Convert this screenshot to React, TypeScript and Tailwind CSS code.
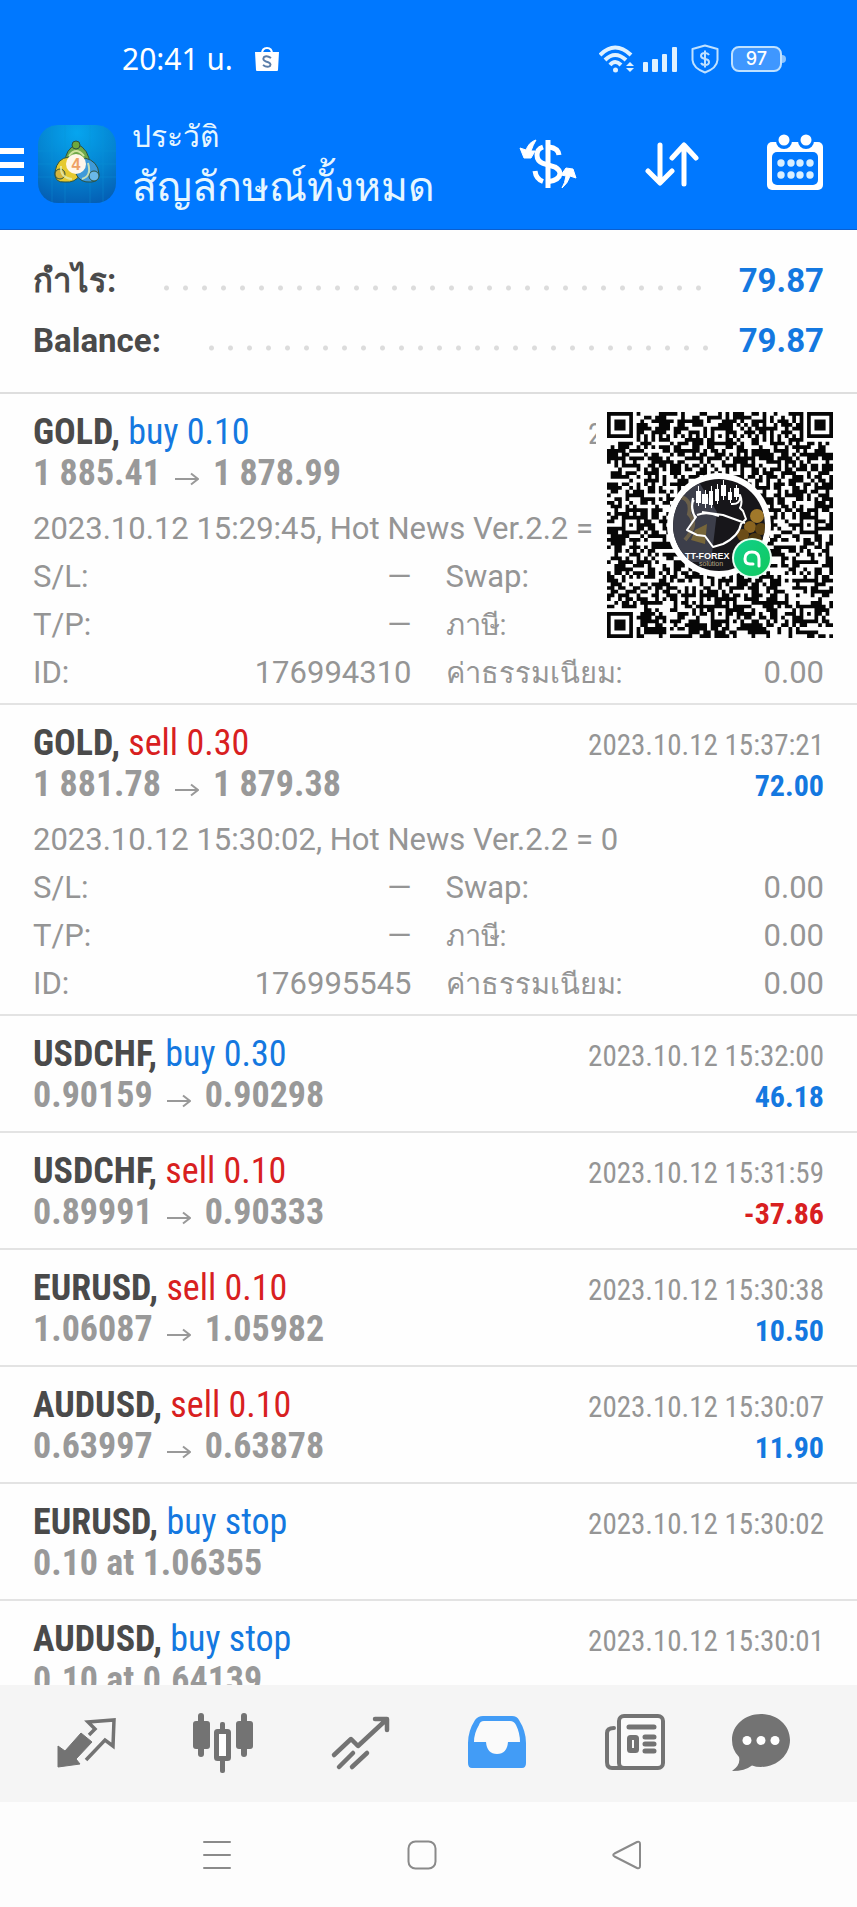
import React from "react";

type Tone = "buy" | "sell";

interface Details {
  comment: string;
  id: string;
}

interface Deal {
  symbol: string;
  action: string;
  tone: Tone;
  price: string;
  target?: string;
  time: string;
  profit?: string;
  loss?: boolean;
  details?: Details;
  code?: boolean;
}

const deals: Deal[] = [
  {
    symbol: "GOLD",
    action: "buy 0.10",
    tone: "buy",
    price: "1 885.41",
    target: "1 878.99",
    time: "2023.10.12 15:37:21",
    details: { comment: "2023.10.12 15:29:45, Hot News Ver.2.2 = 0", id: "176994310" },
    code: true,
  },
  {
    symbol: "GOLD",
    action: "sell 0.30",
    tone: "sell",
    price: "1 881.78",
    target: "1 879.38",
    time: "2023.10.12 15:37:21",
    profit: "72.00",
    details: { comment: "2023.10.12 15:30:02, Hot News Ver.2.2 = 0", id: "176995545" },
  },
  { symbol: "USDCHF", action: "buy 0.30", tone: "buy", price: "0.90159", target: "0.90298", time: "2023.10.12 15:32:00", profit: "46.18" },
  { symbol: "USDCHF", action: "sell 0.10", tone: "sell", price: "0.89991", target: "0.90333", time: "2023.10.12 15:31:59", profit: "-37.86", loss: true },
  { symbol: "EURUSD", action: "sell 0.10", tone: "sell", price: "1.06087", target: "1.05982", time: "2023.10.12 15:30:38", profit: "10.50" },
  { symbol: "AUDUSD", action: "sell 0.10", tone: "sell", price: "0.63997", target: "0.63878", time: "2023.10.12 15:30:07", profit: "11.90" },
  { symbol: "EURUSD", action: "buy stop", tone: "buy", price: "0.10 at 1.06355", time: "2023.10.12 15:30:02" },
  { symbol: "AUDUSD", action: "buy stop", tone: "buy", price: "0.10 at 0.64139", time: "2023.10.12 15:30:01" },
];

const QR_SIZE = 61;

/* Builds one path holding every dark module of the code. */
function buildQrPath(): string {
  const n = QR_SIZE;
  const grid: boolean[][] = Array.from({ length: n }, () => Array<boolean>(n).fill(false));
  let seed = 90217;
  const next = () => {
    seed = (seed * 1103515245 + 12345) % 2147483648;
    return seed / 2147483648;
  };
  for (let y = 0; y < n; y++) for (let x = 0; x < n; x++) grid[y][x] = next() < 0.54;
  for (let i = 8; i < n - 8; i++) {
    grid[6][i] = i % 2 === 0;
    grid[i][6] = i % 2 === 0;
  }
  const rings = (cx: number, cy: number, dark: number[], reach: number) => {
    for (let dy = -reach; dy <= reach; dy++)
      for (let dx = -reach; dx <= reach; dx++) {
        const x = cx + dx;
        const y = cy + dy;
        if (x >= 0 && y >= 0 && x < n && y < n) grid[y][x] = dark.includes(Math.max(Math.abs(dx), Math.abs(dy)));
      }
  };
  for (const [x, y] of [[30, 6], [6, 30], [54, 30], [30, 54], [54, 54]]) rings(x, y, [0, 2], 2);
  for (const [x, y] of [[3, 3], [57, 3], [3, 57]]) rings(x, y, [0, 1, 3], 4);
  let d = "";
  for (let y = 0; y < n; y++)
    for (let x = 0; x < n; x++)
      if (grid[y][x]) {
        let w = 1;
        while (x + w < n && grid[y][x + w]) w++;
        d += `M${x} ${y}h${w}v1h${-w}z`;
        x += w;
      }
  return d;
}

const qrPath = buildQrPath();

function QrCode() {
  return (
    <svg viewBox="0 0 226 226" className="block h-[226px] w-[226px]" role="img" aria-label="QR">
      <defs>
        <clipPath id="badge">
          <circle cx="112" cy="113" r="46" />
        </clipPath>
        <linearGradient id="green" x1="0" y1="0" x2="1" y2="1">
          <stop offset="0" stopColor="#0fd08c" />
          <stop offset="1" stopColor="#12c95c" />
        </linearGradient>
      </defs>
      <g transform="scale(3.705)">
        <path d={qrPath} fill="#060606" />
      </g>
      <circle cx="112" cy="113" r="52" fill="#fff" />
      <g clipPath="url(#badge)">
        <rect x="60" y="60" width="104" height="104" fill="#17161a" />
        <path d="M64 80L92 70L110 100L104 150L64 150Z" fill="#3c3e4a" />
        <path d="M66 84Q86 84 82 102Q92 112 78 128" fill="none" stroke="#6b604a" strokeWidth="4" />
        <path d="M88 118L100 112L98 132L84 128Z" fill="#77663a" />
        <circle cx="150" cy="104" r="7" fill="#a0782a" />
        <circle cx="143" cy="115" r="6" fill="#8a6420" />
        <circle cx="154" cy="117" r="6" fill="#5f4412" />
        <circle cx="136" cy="123" r="6" fill="#6b4c18" />
        <circle cx="148" cy="128" r="7" fill="#4d380f" />
      </g>
      <g fill="#fff">
        <path d="M89 79h5v12h-5zM95 82h6v10h-6zM102 79h4v14h-4zM108 77h4v12h-4zM114 73h5v11h-5zM121 80h4v8h-4zM127 76h5v9h-5z" />
        <path d="M91 74h1v20h-1zM98 78h1v18h-1zM104 74h1v22h-1zM110 72h1v20h-1zM116 68h1v20h-1zM123 76h1v15h-1zM129 73h1v15h-1z" />
      </g>
      <path
        d="M86 86Q83 100 89 105L80 118L90 123L98 124L106 135L116 132Q132 124 134 112L139 107L136 99L133 96Q136 90 133 83Q134 93 124 92M95 100L116 103L138 111M90 103Q100 99 112 104M88 106Q83 92 87 88"
        fill="none"
        stroke="#fff"
        strokeWidth="2"
        strokeLinejoin="round"
      />
      <text x="78" y="147" fontSize="9" fontWeight="700" fill="#fff" fontFamily="Liberation Sans, sans-serif">TT-FOREX</text>
      <text x="92" y="154" fontSize="7" fill="#b8a888" fontFamily="Liberation Sans, sans-serif">solution</text>
      <circle cx="145" cy="146" r="20" fill="#e9fff3" />
      <circle cx="145" cy="146" r="18" fill="url(#green)" />
      <path d="M146 152H143Q138 152 138 147Q138 140 145 140Q152 140 152 147V154" fill="none" stroke="#fff" strokeWidth="3" strokeLinecap="round" />
    </svg>
  );
}

function StatusBar() {
  return (
    <div className="flex h-[117px] items-center justify-between pl-[122px] pr-[71px] text-white">
      <div className="flex items-center gap-[22px]">
        <span className="font-['Noto_Sans','Noto_Sans_Thai',sans-serif] text-[30px] leading-10">20:41 น.</span>
        <svg viewBox="0 0 24 26" className="h-[26px] w-6" aria-hidden="true">
          <path d="M7 8Q7 2 12 2Q17 2 17 8" fill="none" stroke="#fff" strokeWidth="2" />
          <path d="M0 6H24L23 24Q23 25 22 25H2Q1 25 1 24Z" fill="#fff" />
          <path d="M16 12Q12 9 9 11Q7 14 11 15.500Q17 17 15 20Q12 22 8 19" fill="none" stroke="#5a7da8" strokeWidth="2" />
        </svg>
      </div>
      <div className="flex items-center">
        <svg viewBox="0 0 36 28" className="h-7 w-9" aria-hidden="true" fill="none" stroke="#dff1ff">
          <path d="M1 10Q16 -5 32 10" strokeWidth="4" />
          <path d="M6 15Q16 5 27 15" strokeWidth="4" />
          <path d="M11 20Q16 14 22 20" strokeWidth="4" />
          <circle cx="16.500" cy="25" r="2.500" fill="#dff1ff" stroke="none" />
          <path d="M27 21L31 17L35 21ZM27 23L31 27L35 23Z" fill="#dff1ff" stroke="none" />
        </svg>
        <svg viewBox="0 0 36 26" className="ml-[7px] h-[26px] w-9" aria-hidden="true" fill="#dff1ff">
          <rect x="1" y="16" width="5" height="10" rx="1" />
          <rect x="10" y="13" width="6" height="13" rx="1" />
          <rect x="20" y="8" width="5" height="18" rx="1" />
          <rect x="30" y="1" width="5" height="25" rx="1" />
        </svg>
        <svg viewBox="0 0 28 30" className="ml-[13px] h-[30px] w-7" aria-hidden="true" fill="none" stroke="#bfe1ff">
          <path d="M14 1.500L26.500 5V16Q26 24 14 28.500Q2 24 1.500 16V5Z" strokeWidth="2" strokeLinejoin="round" />
          <path d="M18 11Q17 9 14 9Q10 9 10 12Q10 14 14 15Q18 15.500 18 18Q18 21 14 21Q11 21 10 19M14 6.500V23.500" strokeWidth="2" />
        </svg>
        <div className="ml-3 flex items-center">
          <span className="flex h-[26px] w-[51px] items-center justify-center rounded-lg border-2 border-[#bfe1ff] bg-[#3f97ff] font-['Inter',sans-serif] text-lg font-medium leading-5">97</span>
          <span className="h-2 w-1 rounded-r-sm bg-[#8cc4ff]" />
        </div>
      </div>
    </div>
  );
}

function AppLogo() {
  return (
    <svg viewBox="0 0 78 78" className="h-[78px] w-[78px] shrink-0" aria-hidden="true">
      <defs>
        <radialGradient id="tile" cx="0.5" cy="0.1" r="1">
          <stop offset="0" stopColor="#06a5ef" />
          <stop offset="0.55" stopColor="#0482cf" />
          <stop offset="1" stopColor="#0459b0" />
        </radialGradient>
      </defs>
      <rect width="78" height="78" rx="20" fill="url(#tile)" />
      <path d="M0 26H78M0 39H78M0 52H78M14 0V78M27 0V78M52 0V78M65 0V78" stroke="#0a96d8" strokeWidth="1" opacity="0.35" />
      <g stroke="#2d5240" strokeWidth="1">
        <path d="M39 19Q51 24 52 40L39 46L27 38Q27 24 39 19Z" fill="#6fa84a" />
        <path d="M31 32Q19 33 17 47Q16 58 27 57Q37 58 42 50Z" fill="#e6c92f" />
        <path d="M47 33Q60 36 61 49Q61 57 53 57Q42 58 38 49Z" fill="#3f9ad9" />
        <circle cx="38" cy="20" r="4" fill="#6da83c" />
        <circle cx="22" cy="49" r="5" fill="#d5b43c" />
        <circle cx="56" cy="51" r="5" fill="#6ab8e8" />
      </g>
      <path d="M31 31Q38 21 46 31M23 41Q22 53 34 54M44 54Q54 51 50 38" stroke="#e5efb0" strokeWidth="2" fill="none" opacity="0.8" />
      <circle cx="38" cy="39" r="10" fill="#fff6ea" />
      <text x="38" y="45" textAnchor="middle" fontSize="16" fontWeight="700" fill="#eea064" fontFamily="Liberation Sans, sans-serif">4</text>
    </svg>
  );
}

function Header() {
  return (
    <header className="shrink-0 border-b border-[#0b5fd0] bg-[#0078ff]">
      <StatusBar />
      <div className="flex h-28 items-start justify-between pr-[34px]">
        <div className="flex items-start">
          <button type="button" aria-label="เมนู" className="mt-[31px] flex w-6 flex-col gap-2">
            <span className="h-[6px] w-full bg-white" />
            <span className="h-[6px] w-full bg-white" />
            <span className="h-[6px] w-full bg-white" />
          </button>
          <span className="ml-[14px] mt-2">
            <AppLogo />
          </span>
          <h1 className="ml-4 flex flex-col font-normal text-[#e6f6ff]">
            <span className="text-[30px] leading-10">ประวัติ</span>
            <span className="text-[41px] leading-[60px]">สัญลักษณ์ทั้งหมด</span>
          </h1>
        </div>
        <div className="mt-4 flex items-center gap-[68px]">
          <button type="button" aria-label="สกุลเงิน">
            <svg viewBox="0 0 58 60" className="h-[60px] w-[58px]" fill="none" stroke="#fff">
              <path d="M40 22Q39 15 30 14M24 14Q18 16 18 22Q18 28 24 30.500L36 34Q41 37 41 41Q40 47 30 48.500M24 48.500Q17 46 16 38" strokeWidth="5" />
              <path d="M29 7V55" strokeWidth="5" />
              <path d="M17 7Q10 9 7 17L1 15L5 25H12L16 18L12 18Q14 12 17 7Z" fill="#fff" strokeWidth="1" />
              <path d="M43 55Q49 50 51 43L57 45L54 36L47 35L42 42L47 43Q46 50 43 55Z" fill="#fff" strokeWidth="1" />
            </svg>
          </button>
          <button type="button" aria-label="เรียงลำดับ">
            <svg viewBox="0 0 54 60" className="h-[60px] w-[54px]" fill="none" stroke="#fff" strokeWidth="5" strokeLinecap="round" strokeLinejoin="round">
              <path d="M15 12V49M3 38L15 50L27 38M39 51V13M27 25L39 12L51 25" />
            </svg>
          </button>
          <button type="button" aria-label="ปฏิทิน">
            <svg viewBox="0 0 56 60" className="h-[60px] w-14">
              <rect x="0" y="9" width="56" height="48" rx="5" fill="#fff" />
              <rect x="5" y="19" width="46" height="33" rx="5" fill="#0078ff" />
              <circle cx="17" cy="8" r="8" fill="#0078ff" />
              <circle cx="39" cy="8" r="8" fill="#0078ff" />
              <circle cx="17" cy="7" r="5.500" fill="#fff" />
              <circle cx="39" cy="7" r="5.500" fill="#fff" />
              <g fill="#d9efff">
                <circle cx="14" cy="30" r="3.700" />
                <circle cx="24" cy="30" r="3.700" />
                <circle cx="33" cy="30" r="3.700" />
                <circle cx="43" cy="30" r="3.700" />
                <circle cx="14" cy="42" r="3.700" />
                <circle cx="24" cy="42" r="3.700" />
                <circle cx="33" cy="42" r="3.700" />
                <circle cx="43" cy="42" r="3.700" />
              </g>
            </svg>
          </button>
        </div>
      </div>
    </header>
  );
}

function SummaryRow({ label, value }: { label: string; value: string }) {
  return (
    <div className="flex h-[60px] items-center text-[33px] font-bold leading-[60px]">
      <dt className="text-[#4a4a4a]">{label}</dt>
      <div
        aria-hidden="true"
        className="ml-[41px] mr-[26px] mt-[13px] h-[6px] flex-1 bg-[radial-gradient(circle,#dcdcdc_2px,transparent_3px)] bg-[length:19px_6px]"
      />
      <dd className="text-[#1478e0]">{value}</dd>
    </div>
  );
}

function DetailCell({ label, value, thai }: { label: string; value: string; thai?: boolean }) {
  return (
    <div className="flex justify-between">
      <dt className={thai ? "text-[29px]" : undefined}>{label}</dt>
      <dd>{value}</dd>
    </div>
  );
}

function DealRow({ deal }: { deal: Deal }) {
  return (
    <li
      className={`relative border-b-2 border-[#e3e3e3] px-[33px] pt-[18px] font-['Roboto_Condensed','Roboto',sans-serif] ${deal.details ? "pb-[6px]" : "pb-[15px]"}`}
    >
      <div className="flex h-10 items-baseline justify-between">
        <h2 className="text-[36px] font-normal leading-10">
          <span className="font-bold text-[#4a4a4a]">{deal.symbol},</span>{" "}
          <span className={deal.tone === "buy" ? "text-[#1478e0]" : "text-[#d8201f]"}>{deal.action}</span>
        </h2>
        <time className="text-[29px] leading-10 text-[#959595]">{deal.time}</time>
      </div>
      <div className="flex h-[42px] items-baseline justify-between">
        <p className="flex items-center text-[36px] font-bold leading-[42px] text-[#999]">
          {deal.price}
          {deal.target && (
            <>
              <svg viewBox="0 0 24 14" className="mx-[14px] mt-3 h-[14px] w-6" fill="none" stroke="#999" strokeWidth="2" role="img" aria-label="→">
                <path d="M0 7H22M16 1.500L23 7L16 12.500" />
              </svg>
              {deal.target}
            </>
          )}
        </p>
        {deal.profit && (
          <span className={`text-[30px] font-bold leading-[42px] ${deal.loss ? "text-[#d8201f]" : "text-[#1478e0]"}`}>{deal.profit}</span>
        )}
      </div>
      {deal.details && (
        <div className="pt-[11px] font-['Roboto',sans-serif] text-[31px] leading-[48px] text-[#959595]">
          <p>{deal.details.comment}</p>
          <dl className="grid grid-cols-2 gap-x-[34px]">
            <DetailCell label="S/L:" value="—" />
            <DetailCell label="Swap:" value="0.00" />
            <DetailCell label="T/P:" value="—" />
            <DetailCell label="ภาษี:" value="0.00" thai />
            <DetailCell label="ID:" value={deal.details.id} />
            <DetailCell label="ค่าธรรมเนียม:" value="0.00" thai />
          </dl>
        </div>
      )}
      {deal.code && (
        <div className="absolute right-2 top-[6px] bg-[#fefefe] py-3 pl-[11px] pr-4">
          <QrCode />
        </div>
      )}
    </li>
  );
}

const tabs: { label: string; icon: React.ReactNode }[] = [
  {
    label: "ราคา",
    icon: (
      <>
        <path d="M1 27L8 32L24 14L35 23L19 40L23 45L1 48Z" fill="#737373" stroke="#737373" strokeWidth="1" strokeLinejoin="round" />
        <path d="M32 16L38 10L31 3L57 1L56 27L48 21L29 41" fill="none" stroke="#737373" strokeWidth="3.500" />
      </>
    ),
  },
  {
    label: "ชาร์ต",
    icon: (
      <g fill="#737373" transform="translate(-2 -1)">
        <rect x="6" y="-5" width="6" height="44" rx="3" />
        <rect x="1" y="3" width="17" height="28" rx="3" />
        <rect x="49" y="-5" width="6" height="44" rx="3" />
        <rect x="44" y="3" width="17" height="28" rx="3" />
        <rect x="28" y="4" width="5" height="12" rx="2" />
        <rect x="28" y="40" width="5" height="15" rx="2" />
        <rect x="24.500" y="13.500" width="12" height="27" rx="1" fill="#fff" stroke="#737373" strokeWidth="5" />
      </g>
    ),
  },
  {
    label: "เทรด",
    icon: (
      <g fill="none" stroke="#737373" strokeWidth="4.500" strokeLinecap="round" strokeLinejoin="round">
        <path d="M3 36L20 20L27 27L55 1M44 0H56V11M8 48L22 34M21 48L36 34" />
      </g>
    ),
  },
  {
    label: "ประวัติ",
    icon: (
      <>
        <path d="M15 -3H44Q49 -3 51 1Q58 12 58 24V44Q58 49 54 49H4Q0 49 0 44V24Q0 12 7 1Q10 -3 15 -3Z" fill="#429cf6" />
        <path d="M16 2H42Q46 2 48 6Q52 14 52 23H40Q39 35 29 35Q19 35 18 23H6Q6 14 11 6Q12 2 16 2Z" fill="#fafafa" />
      </>
    ),
  },
  {
    label: "ข่าว",
    icon: (
      <g fill="none" stroke="#737373" strokeWidth="4">
        <rect x="14" y="-3" width="44" height="52" rx="5" fill="#fafafa" />
        <path d="M9 9Q2 9 2 14V43Q2 49 7 49H20" strokeLinecap="round" />
        <path d="M24 8H49M40 18H49M40 25H49M40 32H49" strokeLinecap="round" strokeWidth="5" />
        <rect x="24.500" y="18.500" width="7" height="13" strokeWidth="5" rx="1" />
      </g>
    ),
  },
  {
    label: "ข้อความ",
    icon: (
      <>
        <path d="M30 -5C46 -5 59 6 59 21C59 36 46 48 30 48Q25 48 21 46.500Q14 52 1 52Q10 46 8 38Q1 31 1 21C1 6 14 -5 30 -5Z" fill="#737373" />
        <g fill="#fff">
          <circle cx="16" cy="21.500" r="4.500" />
          <circle cx="30" cy="21.500" r="4.500" />
          <circle cx="44" cy="21.500" r="4.500" />
        </g>
      </>
    ),
  },
];

function TabBar() {
  return (
    <nav className="grid h-[117px] shrink-0 grid-cols-[repeat(5,137fr)_115fr] items-center bg-[#f5f5f5] pl-[18px] pr-[38px]">
      {tabs.map((tab) => (
        <button key={tab.label} type="button" aria-label={tab.label} className="flex justify-center">
          <svg viewBox="-1 -6 62 62" className="h-[62px] w-[62px]">
            {tab.icon}
          </svg>
        </button>
      ))}
    </nav>
  );
}

function SystemBar() {
  return (
    <div className="grid h-[105px] shrink-0 grid-cols-3 items-center bg-[#fdfdfd] pl-[114px] pr-[128px]">
      <button type="button" aria-label="แอปล่าสุด" className="flex justify-center">
        <svg viewBox="0 0 30 30" className="h-[30px] w-[30px]" stroke="#8a8a8a" strokeWidth="2" strokeLinecap="round">
          <path d="M2 2H28M2 15H28M2 28H28" />
        </svg>
      </button>
      <button type="button" aria-label="หน้าหลัก" className="flex justify-center">
        <svg viewBox="0 0 30 30" className="h-[30px] w-[30px]" fill="none" stroke="#8a8a8a" strokeWidth="2">
          <rect x="1.500" y="1.500" width="27" height="27" rx="7" />
        </svg>
      </button>
      <button type="button" aria-label="ย้อนกลับ" className="flex justify-center">
        <svg viewBox="0 0 30 30" className="h-[30px] w-[30px]" fill="none" stroke="#8a8a8a" strokeWidth="2" strokeLinejoin="round">
          <path d="M2.500 13.500L25 2Q28 1 28 4V26Q28 29 25 28L2.500 16.500Q0 15 2.500 13.500Z" />
        </svg>
      </button>
    </div>
  );
}

export default function App() {
  return (
    <div className="flex h-screen flex-col bg-[#fefefe] font-['Roboto',sans-serif]">
      <Header />
      <main className="min-h-0 flex-1 overflow-y-auto [scrollbar-width:none]">
        <dl className="border-b-2 border-[#dedede] px-[33px] pb-[21px] pt-[21px]">
          <SummaryRow label="กำไร:" value="79.87" />
          <SummaryRow label="Balance:" value="79.87" />
        </dl>
        <ul>
          {deals.map((deal, i) => (
            <DealRow key={i} deal={deal} />
          ))}
        </ul>
      </main>
      <TabBar />
      <SystemBar />
    </div>
  );
}
